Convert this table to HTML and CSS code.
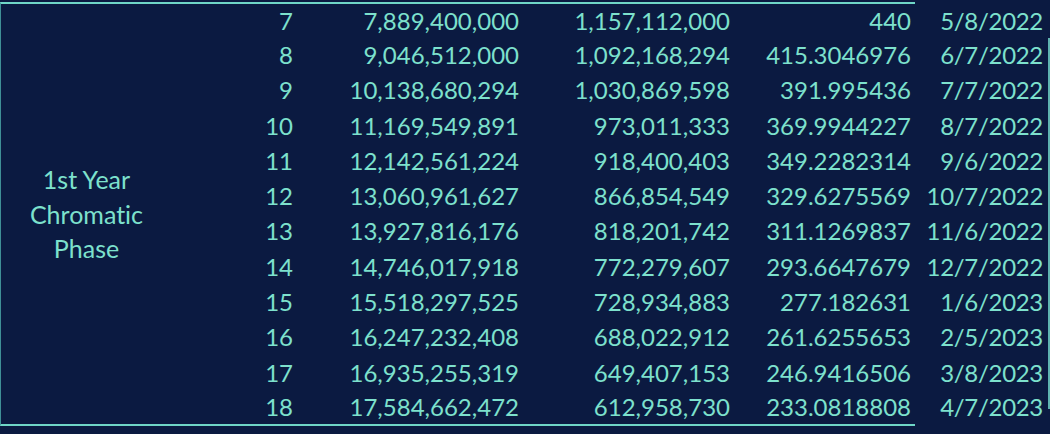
FILE: index.html
```html
<!DOCTYPE html>
<html>
<head>
<meta charset="utf-8">
<link rel="stylesheet" href="styles.css">
</head>
<body>
<div class="sheet">
<table class="grid">
<colgroup>
<col class="c-label"><col class="c-n"><col class="c-a"><col class="c-b"><col class="c-c"><col class="c-d">
</colgroup>
<tbody>
<tr class="first"><td class="label" rowspan="12">1st Year<br>Chromatic<br>Phase</td><td>7</td><td>7,889,400,000</td><td>1,157,112,000</td><td>440</td><td class="date">5/8/2022</td></tr>
<tr><td>8</td><td>9,046,512,000</td><td>1,092,168,294</td><td>415.3046976</td><td class="date">6/7/2022</td></tr>
<tr><td>9</td><td>10,138,680,294</td><td>1,030,869,598</td><td>391.995436</td><td class="date">7/7/2022</td></tr>
<tr><td>10</td><td>11,169,549,891</td><td>973,011,333</td><td>369.9944227</td><td class="date">8/7/2022</td></tr>
<tr><td>11</td><td>12,142,561,224</td><td>918,400,403</td><td>349.2282314</td><td class="date">9/6/2022</td></tr>
<tr><td>12</td><td>13,060,961,627</td><td>866,854,549</td><td>329.6275569</td><td class="date">10/7/2022</td></tr>
<tr><td>13</td><td>13,927,816,176</td><td>818,201,742</td><td>311.1269837</td><td class="date">11/6/2022</td></tr>
<tr><td>14</td><td>14,746,017,918</td><td>772,279,607</td><td>293.6647679</td><td class="date">12/7/2022</td></tr>
<tr><td>15</td><td>15,518,297,525</td><td>728,934,883</td><td>277.182631</td><td class="date">1/6/2023</td></tr>
<tr><td>16</td><td>16,247,232,408</td><td>688,022,912</td><td>261.6255653</td><td class="date">2/5/2023</td></tr>
<tr><td>17</td><td>16,935,255,319</td><td>649,407,153</td><td>246.9416506</td><td class="date">3/8/2023</td></tr>
<tr class="last"><td>18</td><td>17,584,662,472</td><td>612,958,730</td><td>233.0818808</td><td class="date">4/7/2023</td></tr>
</tbody>
</table>
<div class="edge"></div>
</div>
</body>
</html>
```

FILE: styles.css
```css
html, body {
  margin: 0;
  padding: 0;
  background: #0b1a41;
}
body {
  width: 1050px;
  height: 434px;
  overflow: hidden;
  font-family: "Lato", "Open Sans", sans-serif;
  font-size: 24px;
  font-variant-ligatures: none;
  font-feature-settings: "liga" 0, "clig" 0;
  color: #7de1cd;
}
.sheet {
  position: relative;
  padding-top: 2px;
}
.grid {
  border-collapse: separate;
  border-spacing: 0;
  table-layout: fixed;
  width: 1047px;
}
.c-label { width: 172px; }
.c-n { width: 125px; }
.c-a { width: 226px; }
.c-b { width: 211px; }
.c-c { width: 181px; }
.c-d { width: 132px; }
.grid td {
  height: 35.3px;
  padding: 0 4px 0 0;
  text-align: right;
  vertical-align: middle;
  white-space: nowrap;
  line-height: 1;
  box-sizing: border-box;
}
.grid td.date {
  letter-spacing: -0.3px;
}
.grid tr.first td {
  border-top: 2px solid #6fd6c7;
}
.grid tr.last td {
  border-bottom: 2px solid #6fd6c7;
}
.grid tr.first td.date,
.grid tr.last td.date {
  border-color: transparent;
}
.grid td.label {
  text-align: center;
  padding: 0;
  font-size: 25px;
  line-height: 34.5px;
  border-left: 1px solid #3f8f96;
  border-top: 2px solid #6fd6c7;
  border-bottom: 2px solid #6fd6c7;
}
.edge {
  position: absolute;
  left: 1048px;
  top: 38px;
  width: 2px;
  height: 371px;
  background: #5fb3b0;
}
```
